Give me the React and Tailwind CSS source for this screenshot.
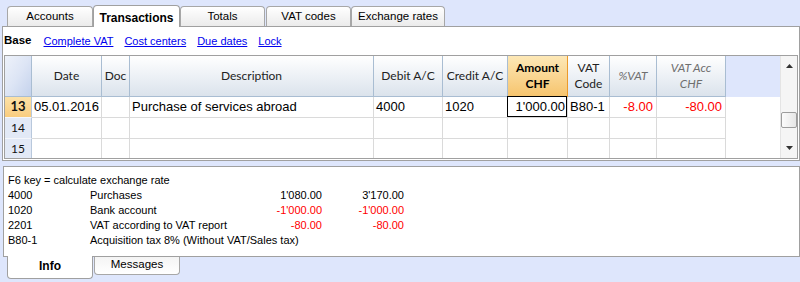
import React from 'react'

const ui = "font-['Liberation_Sans',Arial,sans-serif]"
const hdr = "font-['Lato','Liberation_Sans',sans-serif]"

function TopTab({ label, active, w, ml = '' }) {
  if (active)
    return (
      <div
        className={`relative z-10 -mb-px flex h-[22px] items-start justify-center rounded-t-[4px] border border-b-0 border-[#a0a0a0] bg-white pt-[3px] text-[12px] font-bold text-black ${w} ${ml}`}
      >
        {label}
      </div>
    )
  return (
    <div
      className={`flex h-[20px] items-center justify-center rounded-t-[4px] border border-b-0 border-[#a7a7a7] bg-gradient-to-b from-white to-[#ebebeb] pt-px text-[11.5px] text-black ${w} ${ml}`}
    >
      {label}
    </div>
  )
}

function HeadCell({ children, className = 'text-[#222]' }) {
  return (
    <div
      className={`flex flex-col items-center justify-center border-r border-b border-[#a9bdd2] bg-gradient-to-b from-white to-[#dbe3ec] text-center text-[12px] leading-[16px] ${hdr} ${className}`}
    >
      {children}
    </div>
  )
}

function Cell({ children, className = '', red, last }) {
  return (
    <div
      className={`relative flex items-center whitespace-nowrap border-r border-[#dadada] text-[13px] ${
        red ? 'text-[#ff0000]' : 'text-black'
      } ${last ? '' : 'border-b'} ${className}`}
    >
      {children}
    </div>
  )
}

function RowNum({ n, active, last }) {
  return (
    <div
      className={`flex items-center justify-center border-r border-[#b8c8dc] ${last ? '' : 'border-b border-b-[#f4f6fb]'} ${
        active ? 'bg-gradient-to-b from-[#fde2a8] to-[#f9cc7e] text-[13px] font-bold' : 'bg-[#e2e9f6] text-[12px]'
      } ${hdr} text-[#111]`}
    >
      {n}
    </div>
  )
}

function EmptyRow({ n, last }) {
  return (
    <>
      <RowNum n={n} last={last} />
      {Array.from({ length: 9 }).map((_, i) => (
        <Cell key={i} last={last} />
      ))}
      <div className="bg-white" />
    </>
  )
}

export default function App() {
  const infoRows = [
    { code: '4000', desc: 'Purchases', a: "1'080.00", b: "3'170.00" },
    { code: '1020', desc: 'Bank account', a: "-1'000.00", b: "-1'000.00", red: true },
    { code: '2201', desc: 'VAT according to VAT report', a: '-80.00', b: '-80.00', red: true },
  ]

  return (
    <div className={`h-[282px] w-[800px] overflow-hidden bg-[#dee6fc] ${ui}`}>
      {/* top tabs */}
      <div className="flex h-[26px] items-end pl-[7px]">
        <TopTab label="Accounts" w="w-[86px]" />
        <TopTab label="Transactions" active w="w-[87px]" />
        <TopTab label="Totals" w="w-[85px]" />
        <TopTab label="VAT codes" w="w-[85px]" ml="ml-px" />
        <TopTab label="Exchange rates" w="w-[94px]" />
      </div>

      {/* main panel */}
      <div className="ml-[2px] flex h-[135px] w-[798px] flex-col border border-[#a0a0a0] bg-white">
        <div className="flex h-[28px] items-center gap-[11px] pl-px text-[11px]">
          <span className="mr-px text-[11.5px] font-bold text-black">Base</span>
          <span className="text-[#0000ee] underline">Complete VAT</span>
          <span className="text-[#0000ee] underline">Cost centers</span>
          <span className="text-[#0000ee] underline">Due dates</span>
          <span className="text-[#0000ee] underline">Lock</span>
        </div>

        <div className="ml-px flex h-[104px] w-[794px] border border-[#a0a0a0]">
          <div className="grid flex-1 grid-cols-[27px_70px_28px_244px_69px_65px_60px_42px_47px_69px_1fr] grid-rows-[41px_21px_21px_19px]">
            {/* header */}
            <div className="border-r border-b border-[#a9bdd2] bg-gradient-to-br from-[#eef2fa] via-[#dde5f5] to-[#c4d2ec]" />
            <HeadCell>Date</HeadCell>
            <HeadCell>Doc</HeadCell>
            <HeadCell>Description</HeadCell>
            <HeadCell>Debit A/C</HeadCell>
            <HeadCell>Credit A/C</HeadCell>
            <div
              className={`flex flex-col items-center justify-center border-r border-b border-[#ec9a2a] bg-gradient-to-b from-[#fde8b6] to-[#f6c46d] text-center text-[12px] font-bold leading-[16px] text-black ${hdr}`}
            >
              <span>Amount</span>
              <span>CHF</span>
            </div>
            <HeadCell>
              <span>VAT</span>
              <span>Code</span>
            </HeadCell>
            <HeadCell className="italic text-[#6f6f6f]">%VAT</HeadCell>
            <HeadCell className="italic text-[#6f6f6f]">
              <span>VAT Acc</span>
              <span>CHF</span>
            </HeadCell>
            <div className="bg-[#dee6fc]" />

            {/* row 13 */}
            <RowNum n="13" active />
            <Cell className="pl-[2px]">05.01.2016</Cell>
            <Cell />
            <Cell className="pl-[2px]">Purchase of services abroad</Cell>
            <Cell className="pl-[2px]">4000</Cell>
            <Cell className="pl-[2px]">1020</Cell>
            <Cell className="justify-end pr-[2px]">
              <div className="absolute -top-px -left-px right-0 bottom-0 border border-black" />
              1'000.00
            </Cell>
            <Cell className="pl-[2px]">B80-1</Cell>
            <Cell red className="justify-end pr-[3px]">-8.00</Cell>
            <Cell red className="justify-end pr-[3px]">-80.00</Cell>
            <div className="bg-white" />

            <EmptyRow n="14" />
            <EmptyRow n="15" last />
          </div>

          {/* scrollbar */}
          <div className="flex w-[17px] flex-col items-center border-l border-[#e4e4e4] bg-[#f5f5f5]">
            <div className="flex h-[17px] w-full items-center justify-center pt-[2px]">
              <svg width="7" height="4" viewBox="0 0 7 4">
                <path d="M3.5 0 L7 4 L0 4 Z" fill="#333" />
              </svg>
            </div>
            <div className="mt-[39px] h-[16px] w-[16px] rounded-[2px] border border-[#9c9c9c] bg-gradient-to-r from-[#fbfbfb] to-[#e6e6e6]" />
            <div className="flex-1" />
            <div className="flex h-[17px] w-full items-center justify-center pb-[3px]">
              <svg width="7" height="4" viewBox="0 0 7 4">
                <path d="M0 0 L7 0 L3.5 4 Z" fill="#333" />
              </svg>
            </div>
          </div>
        </div>
      </div>

      {/* info panel */}
      <div className="mt-[5px] ml-[3px] h-[91px] w-[797px] border border-[#a0a0a0] bg-white pt-[6px] pl-[4px] text-[11px] leading-[15px] text-black">
        <div className="grid grid-cols-[82px_150px_82px_82px]">
          <div className="col-span-4">F6 key = calculate exchange rate</div>
          {infoRows.map((r) => (
            <React.Fragment key={r.code}>
              <div>{r.code}</div>
              <div>{r.desc}</div>
              <div className={`text-right ${r.red ? 'text-[#ff0000]' : ''}`}>{r.a}</div>
              <div className={`text-right ${r.red ? 'text-[#ff0000]' : ''}`}>{r.b}</div>
            </React.Fragment>
          ))}
          <div>B80-1</div>
          <div className="col-span-3 whitespace-nowrap">Acquisition tax 8% (Without VAT/Sales tax)</div>
        </div>
      </div>

      {/* bottom tabs */}
      <div className="flex items-start pl-[7px]">
        <div className="relative z-10 -mt-px flex h-[23px] w-[86px] items-end justify-center rounded-b-[4px] border border-t-0 border-[#a0a0a0] bg-white pb-[3px] text-[12px] font-bold">
          Info
        </div>
        <div className="ml-px flex h-[18px] w-[86px] items-center justify-center rounded-b-[4px] border border-t-0 border-[#a7a7a7] bg-gradient-to-b from-[#f4f4f4] to-white pb-[2px] text-[11.5px]">
          Messages
        </div>
      </div>
    </div>
  )
}
